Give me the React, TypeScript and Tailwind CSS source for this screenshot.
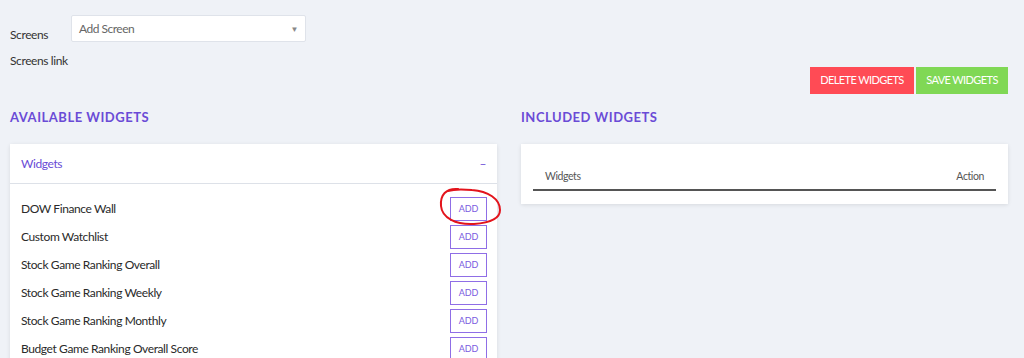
const widgets = [
  "DOW Finance Wall",
  "Custom Watchlist",
  "Stock Game Ranking Overall",
  "Stock Game Ranking Weekly",
  "Stock Game Ranking Monthly",
  "Budget Game Ranking Overall Score",
];

function AddButton({ marked }: { marked?: boolean }) {
  return (
    <span className="relative inline-flex">
      <button className="h-[24px] w-[37px] border border-[#8f6ee6] bg-white text-[9px] tracking-[-0.1px] text-[#7a5ae0]">
        ADD
      </button>
      {marked && (
        <svg
          className="pointer-events-none absolute -left-[14px] -top-[12px] overflow-visible"
          width="68"
          height="42"
          viewBox="0 0 68 42"
          fill="none"
        >
          <path
            d="M22 4 C10 3, 4 10, 5 21 C6 33, 20 40, 38 39 C52 38, 64 34, 64 25 C64 14, 52 6, 36 5 C26 4, 18 4, 12 6"
            stroke="#e3141c"
            strokeWidth="2"
            strokeLinecap="round"
          />
        </svg>
      )}
    </span>
  );
}

export default function App() {
  return (
    <div className="h-[358px] w-full overflow-hidden bg-[#eff2f7] pl-[10px] pr-[16px] pt-[15px] font-['Lato',sans-serif] text-[#333]">
      <div className="flex items-start">
        <span className="w-[61px] pt-[12px] text-[12px] leading-[15px] tracking-[-0.4px]">Screens</span>
        <div className="flex h-[27px] w-[235px] items-center justify-between rounded-[2px] border border-[#dfe3ea] bg-white pl-[7px] pr-[7px] text-[12px] tracking-[-0.5px] text-[#666]">
          <span>Add Screen</span>
          <span className="text-[8px] text-[#888]">▼</span>
        </div>
      </div>

      <div className="mt-[10px] flex items-start justify-between">
        <span className="text-[12px] leading-[18px] tracking-[-0.4px]">Screens link</span>
        <div className="mt-[15px] flex gap-[2px]">
          <button className="h-[27px] w-[104px] bg-[#ff4b55] text-[11px] tracking-[-0.6px] text-white">
            DELETE WIDGETS
          </button>
          <button className="h-[27px] w-[92px] bg-[#80d855] text-[11px] tracking-[-0.6px] text-white">
            SAVE WIDGETS
          </button>
        </div>
      </div>

      <div className="mt-[14px] grid grid-cols-2 gap-[24px]">
        <div>
          <h2 className="text-[13px] font-bold leading-[18px] tracking-[0.04em] text-[#6a4bd6]">
            AVAILABLE WIDGETS
          </h2>
          <div className="mt-[18px] bg-white shadow-[0_1px_4px_rgba(0,0,0,0.1)]">
            <div className="flex h-[40px] items-center justify-between border-b border-[#dde1e8] pl-[11px] pr-[11px] text-[12px] tracking-[-0.4px] text-[#6a4bd6]">
              <span>Widgets</span>
              <span>–</span>
            </div>
            <div className="pt-[11px]">
              {widgets.map((w, i) => (
                <div key={w} className="flex h-[28px] items-center justify-between pl-[11px] pr-[10px]">
                  <span className="text-[12px] tracking-[-0.4px] text-[#2a2a2a]">{w}</span>
                  <AddButton marked={i === 0} />
                </div>
              ))}
            </div>
          </div>
        </div>

        <div>
          <h2 className="text-[13px] font-bold leading-[18px] tracking-[0.04em] text-[#6a4bd6]">
            INCLUDED WIDGETS
          </h2>
          <div className="mt-[18px] bg-white px-[12px] pb-[13px] pt-[25px] shadow-[0_1px_4px_rgba(0,0,0,0.1)]">
            <div className="flex items-center justify-between border-b-2 border-[#555] px-[12px] pb-[4px] text-[10.5px] tracking-[-0.4px] text-[#555]">
              <span>Widgets</span>
              <span>Action</span>
            </div>
          </div>
        </div>
      </div>
    </div>
  );
}
